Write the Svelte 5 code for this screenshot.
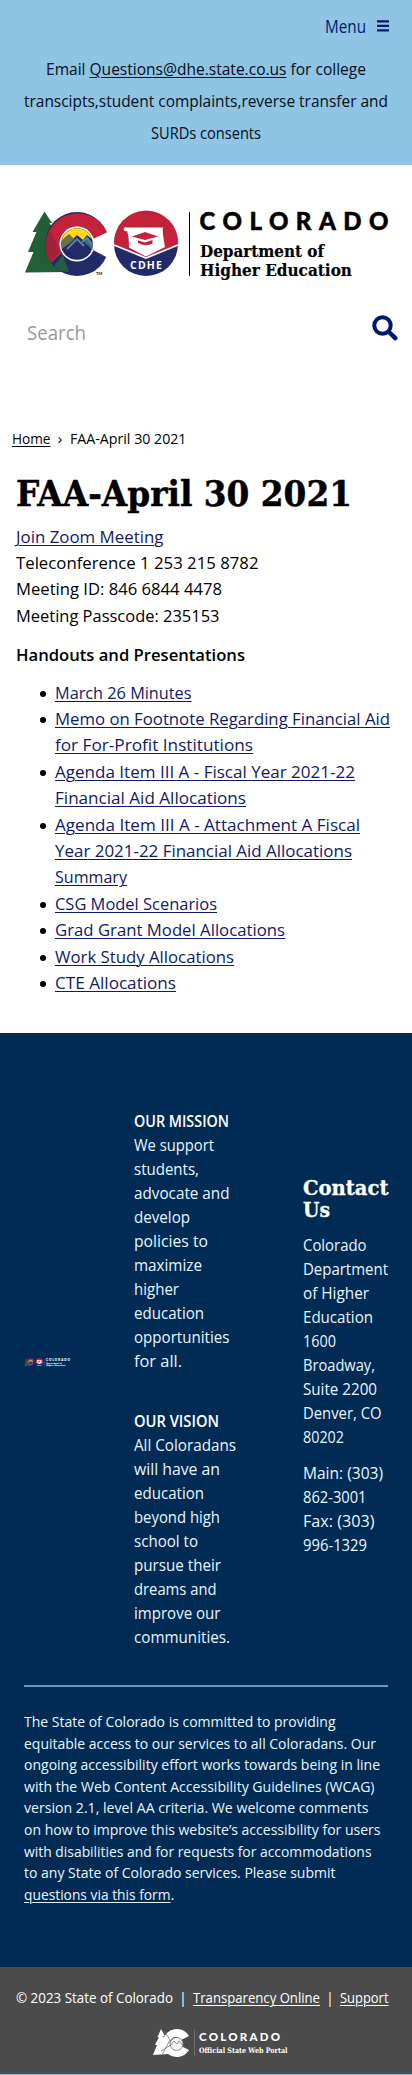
<script>
  const details = [
    ['Teleconference 1 253 215 8782', 242.5],
    ['Meeting ID: 846 6844 4478', 206],
    ['Meeting Passcode: 235153', 203.5]
  ];
  const handouts = [
    [['March 26 Minutes', 136.5]],
    [['Memo on Footnote Regarding Financial Aid', 335], ['for For-Profit Institutions', 198]],
    [['Agenda Item III A - Fiscal Year 2021-22', 300], ['Financial Aid Allocations', 191]],
    [['Agenda Item III A - Attachment A Fiscal', 305], ['Year 2021-22 Financial Aid Allocations', 297], ['Summary', 72]],
    [['CSG Model Scenarios', 162]],
    [['Grad Grant Model Allocations', 230]],
    [['Work Study Allocations', 179]],
    [['CTE Allocations', 121]]
  ];
  const mission = [['We support', 80], ['students,', 65], ['advocate and', 95.5], ['develop', 56], ['policies to', 74], ['maximize', 68], ['higher', 45], ['education', 70], ['opportunities', 95.5], ['for all.', 48]];
  const vision = [['All Coloradans', 102], ['will have an', 86], ['education', 70], ['beyond high', 86], ['school to', 64], ['pursue their', 87], ['dreams and', 82.5], ['improve our', 86.5], ['communities.', 96]];
  const address = [['Colorado', 63.5], ['Department', 85], ['of Higher', 66], ['Education', 70], ['1600', 33], ['Broadway,', 72], ['Suite 2200', 74], ['Denver, CO', 78.5], ['80202', 41]];
  const phones = [['Main: (303)', 80], ['862-3001', 63.5], ['Fax: (303)', 71.5], ['996-1329', 64]];
  const statement = [
    ['The State of Colorado is committed to providing', 311.5],
    ['equitable access to our services to all Coloradans. Our', 352],
    ['ongoing accessibility effort works towards being in line', 356],
    ['with the Web Content Accessibility Guidelines (WCAG)', 350.5],
    ['version 2.1, level AA criteria. We welcome comments', 344.5],
    ['on how to improve this website’s accessibility for users', 356.5],
    ['with disabilities and for requests for accommodations', 347.5],
    ['to any State of Colorado services. Please submit', 311.5]
  ];

  // Condenses a line of text to the given measure and gives back the spare room.
  function condense(node, width) {
    const natural = node.getBoundingClientRect().width;
    node.style.transform = `scaleX(${width / natural})`;
    node.style.marginRight = width - natural + 'px';
  }
</script>

{#snippet t(text, width)}<span class="t" use:condense={width}>{text}</span>{/snippet}
{#snippet lines(rows)}{#each rows as [text, width]}<div>{@render t(text, width)}</div>{/each}{/snippet}

{#snippet fullLogo(dark)}
  {@const ink = dark ? '#fff' : '#000'}
  <svg class="logo" viewBox="24 210 365 70" role="img" aria-label="Colorado Department of Higher Education">
    <path fill="#215f37" d="M44.500 211.500L52 223H49.500L58 236H55L64 251H61L70 272L25 272.500L33.500 252H28L36.500 232H32.500Z"/>
    <circle cx="77" cy="244" r="32" fill="#232a68"/>
    <path fill="#c4213b" d="M107 232.500A32 32 0 1 0 51 263L64 251L77 244L95 240Z"/>
    <path fill="#245e40" d="M54 266L63 255L69 272L60 271Z"/>
    <path fill="#8c2438" opacity=".6" d="M49 229L60 250L51 263A32 32 0 0 1 49 229Z"/>
    <path fill={dark ? '#002b54' : '#fff'} d="M93 239L110 231V259L93 250Z"/>
    <circle cx="77" cy="244" r="17.500" fill="#fff"/>
    <circle cx="77" cy="244" r="15.800" fill="#232a68"/>
    <path fill="#fddb12" d="M61.500 241A15.800 15.800 0 0 1 92 239L87 235L83 240L77 235L69 243L65 238Z"/>
    <path fill="#6d7244" d="M62 240L69 234L75 240L61.500 249Z"/>
    <path fill="#347080" d="M83 241L87 236L92.500 243V250Z"/>
    <path fill="#232a68" d="M62 250L77 237L91 252L86 257L67 256Z"/>
    <path fill="none" stroke="#5c86a0" stroke-width="1.800" d="M67 249L77 239L84 246M82 242L87 238L92 245"/>
    {#if !dark}<text x="96" y="275" font-size="4" font-family="Lato, sans-serif" font-weight="700">TM</text>{/if}
    <circle cx="146" cy="244" r="32" fill="#232a68"/>
    <path fill="#c4213b" d="M114.200 245A32 32 0 1 1 178 245L146 257Z"/>
    <path fill="none" stroke="#fff" stroke-width="1.800" d="M114 245L146 258L178 245"/>
    <path fill="#fff" d="M127 227.500H163Q162 231 165 247L146 256.500L129 247.500Q129 236 127 231Q124 232 123.500 229Q124 226.500 127 227.500Z"/>
    <path fill="#c4213b" d="M132 236.500L145 232L158 236.500L145 240Z"/>
    <path fill="#c4213b" d="M138 240.500L145 242.500L152.500 240V243.500Q145 247 138 243Z"/>
    <text x="130" y="269" font-size="10.500" font-family="Open Sans, sans-serif" font-weight="700" fill="#fff" textLength="32">CDHE</text>
    <path stroke={ink} stroke-width="1" d="M189.500 212V276"/>
    <g fill={ink}>
      <text x="199.500" y="229.500" font-family="Lato, sans-serif" font-weight="900" font-size="24" textLength="189" stroke={ink} stroke-width=".5">COLORADO</text>
      <g font-family="DejaVu Serif, serif" font-weight="700" font-size="16.500" stroke={ink} stroke-width=".2">
        <text x="200" y="257" textLength="124" lengthAdjust="spacingAndGlyphs">Department of</text>
        <text x="200" y="275.500" textLength="152" lengthAdjust="spacingAndGlyphs">Higher Education</text>
      </g>
    </g>
  </svg>
{/snippet}

<div class="page">
  <header>
    <div class="menu">{@render t('Menu', 41)}
      <svg width="12" height="12" viewBox="0 0 12 12" stroke="#001970" stroke-width="2.200"><path d="M0 1.300H12M0 5.800H12M0 10.300H12"/></svg>
    </div>
    <div class="notice">
      <div><span class="t" use:condense={320}>Email <a href="#email">Questions@dhe.state.co.us</a> for college</span></div>
      {@render lines([['transcipts,student complaints,reverse transfer and', 364], ['SURDs consents', 110]])}
    </div>
  </header>

  <div class="brand">{@render fullLogo(false)}</div>

  <div class="search">
    {@render t('Search', 59)}
    <svg width="26" height="26" viewBox="0 0 26 26" fill="none" stroke="#001970"><circle cx="10.500" cy="10.500" r="8.200" stroke-width="4"/><path d="M17 17L23.300 23.200" stroke-width="4.500" stroke-linecap="round"/></svg>
  </div>

  <nav><a href="#home">{@render t('Home', 38.5)}</a><span class="sep">›</span>{@render t('FAA-April 30 2021', 116.5)}</nav>

  <main>
    <h1>{@render t('FAA-April 30 2021', 336)}</h1>
    <div><a href="#zoom">{@render t('Join Zoom Meeting', 147.5)}</a></div>
    {@render lines(details)}
    <div class="sub">{@render t('Handouts and Presentations', 229)}</div>
    <ul>
      {#each handouts as item}
        <li><a href="#handout">{@render lines(item)}</a></li>
      {/each}
    </ul>
  </main>

  <footer>
    <div class="cols">
      <div class="mini">{@render fullLogo(true)}</div>
      <div class="goals">
        <b>{@render t('OUR MISSION', 95)}</b>
        {@render lines(mission)}
        <b class="second">{@render t('OUR VISION', 85)}</b>
        {@render lines(vision)}
      </div>
      <div class="contact">
        <h2>{@render lines([['Contact', 85.5], ['Us', 27]])}</h2>
        {@render lines(address)}
        <div class="phones">{@render lines(phones)}</div>
      </div>
    </div>
    <div class="statement">
      {@render lines(statement)}
      <div><a href="#form">{@render t('questions via this form', 146.5)}</a>.</div>
    </div>
  </footer>

  <div class="legal">
    <div class="links">
      {@render t('© 2023 State of Colorado', 157)}
      <i>|</i>
      <a href="#transparency">{@render t('Transparency Online', 127)}</a>
      <i>|</i>
      <a href="#support">{@render t('Support', 48.5)}</a>
    </div>
    <svg class="portal" width="140" height="34" viewBox="0 0 140 34">
      <g fill="#fff">
        <path d="M9 2L13 9H11L15 16H13L17 27L1 28L5 18H3L7 10H5.500Z"/>
        <path d="M37 9A14 14 0 1 0 37 23L29 19A6 6 0 1 1 29 13Z"/>
        <text x="47" y="14" font-family="Lato, sans-serif" font-weight="900" font-size="11.500" textLength="81">COLORADO</text>
        <text x="47" y="26.300" font-family="DejaVu Serif, serif" font-weight="700" font-size="7.500" textLength="88.500" lengthAdjust="spacingAndGlyphs">Official State Web Portal</text>
      </g>
      <g fill="none" stroke="#777" stroke-width=".8">
        <path d="M13 5L18 13L10 28M9 24L19 18M42.500 2V29"/>
        <circle cx="24.500" cy="17" r="6.500" fill="#f4f4f4"/>
        <path d="M18 19L22 14L25 17L27 14L31 19"/>
      </g>
    </svg>
  </div>
</div>

<style>
  :global(body) { margin: 0; background: #fff; }
  .page { width: 412px; height: 2075px; overflow: hidden; display: flex; flex-direction: column; font-family: "Open Sans", sans-serif; color: #000; background: #8fb5d5; }
  .page > * { box-sizing: border-box; flex: none; }
  .logo, .portal { overflow: visible; }
  .t { display: inline-block; white-space: pre; transform-origin: left; }
  a, a .t { color: inherit; text-decoration: underline; text-decoration-thickness: 1px; text-underline-offset: 2px; }
  header { height: 165px; background: #8fc4e5; padding-top: 12px; }
  .menu { display: flex; align-items: center; justify-content: flex-end; gap: 11px; height: 28px; padding-right: 23px; font-size: 18px; color: #001970; }
  .notice { margin-top: 13px; font-size: 16px; line-height: 32px; text-align: center; color: #001020; }
  .brand { height: 136px; padding: 45px 0 0 24px; background: #fff; }
  .brand .logo { display: block; width: 365px; height: 70px; }
  .search { display: flex; justify-content: space-between; height: 127px; padding: 14px 14px 0 27px; background: #fff; font-size: 20px; line-height: 35px; color: #999; }
  nav { display: flex; height: 44px; padding: 0 12px; background: #fff; font-size: 15px; line-height: 21px; }
  .sep { width: 19px; text-align: center; }
  main { height: 561px; padding: 0 15.5px; background: #fff; font-size: 17px; line-height: 26.4px; }
  h1 { margin: 0 0 8.5px; font: 700 36px/43px "DejaVu Serif", serif; -webkit-text-stroke: .5px #000; }
  main a { color: #101a68; }
  .sub { font-weight: 600; margin: 12.8px 0 11.2px; }
  ul { margin: 0; padding-left: 39.5px; list-style: none; }
  li { display: flex; }
  li::before { content: ""; flex: none; width: 6px; height: 6px; margin: 11.3px 9px 0 -15px; border-radius: 50%; background: #000; }
  footer { height: 934px; background: #002b54; color: #e8f6ff; padding: 76px 24px 0; font-size: 16px; line-height: 24px; }
  .cols { display: grid; grid-template-columns: 110px 168.5px 1fr; height: 576px; border-bottom: 2px solid #6f94c6; align-items: start; }
  .mini { padding-top: 249px; }
  .mini .logo { display: block; width: 46px; height: 9px; }
  .goals b { display: block; font-weight: 600; color: #fff; }
  .goals .second { margin-top: 36px; }
  .contact { padding-top: 68px; }
  h2 { margin: 0 0 12px; font: 700 21px/22px "DejaVu Serif", serif; color: #fff; -webkit-text-stroke: .3px #fff; }
  .phones { margin-top: 12px; }
  .statement { padding-top: 24px; font-size: 14.4px; line-height: 21.6px; }
  .legal { height: 107px; background: #4b4b4b; color: #fff; font-size: 14.4px; padding: 20px 16px 0; }
  .links { display: flex; gap: 6px; line-height: 22px; height: 40px; }
  i { font-style: normal; width: 8px; text-align: center; }
  .portal { display: block; margin-left: 136px; }
</style>
